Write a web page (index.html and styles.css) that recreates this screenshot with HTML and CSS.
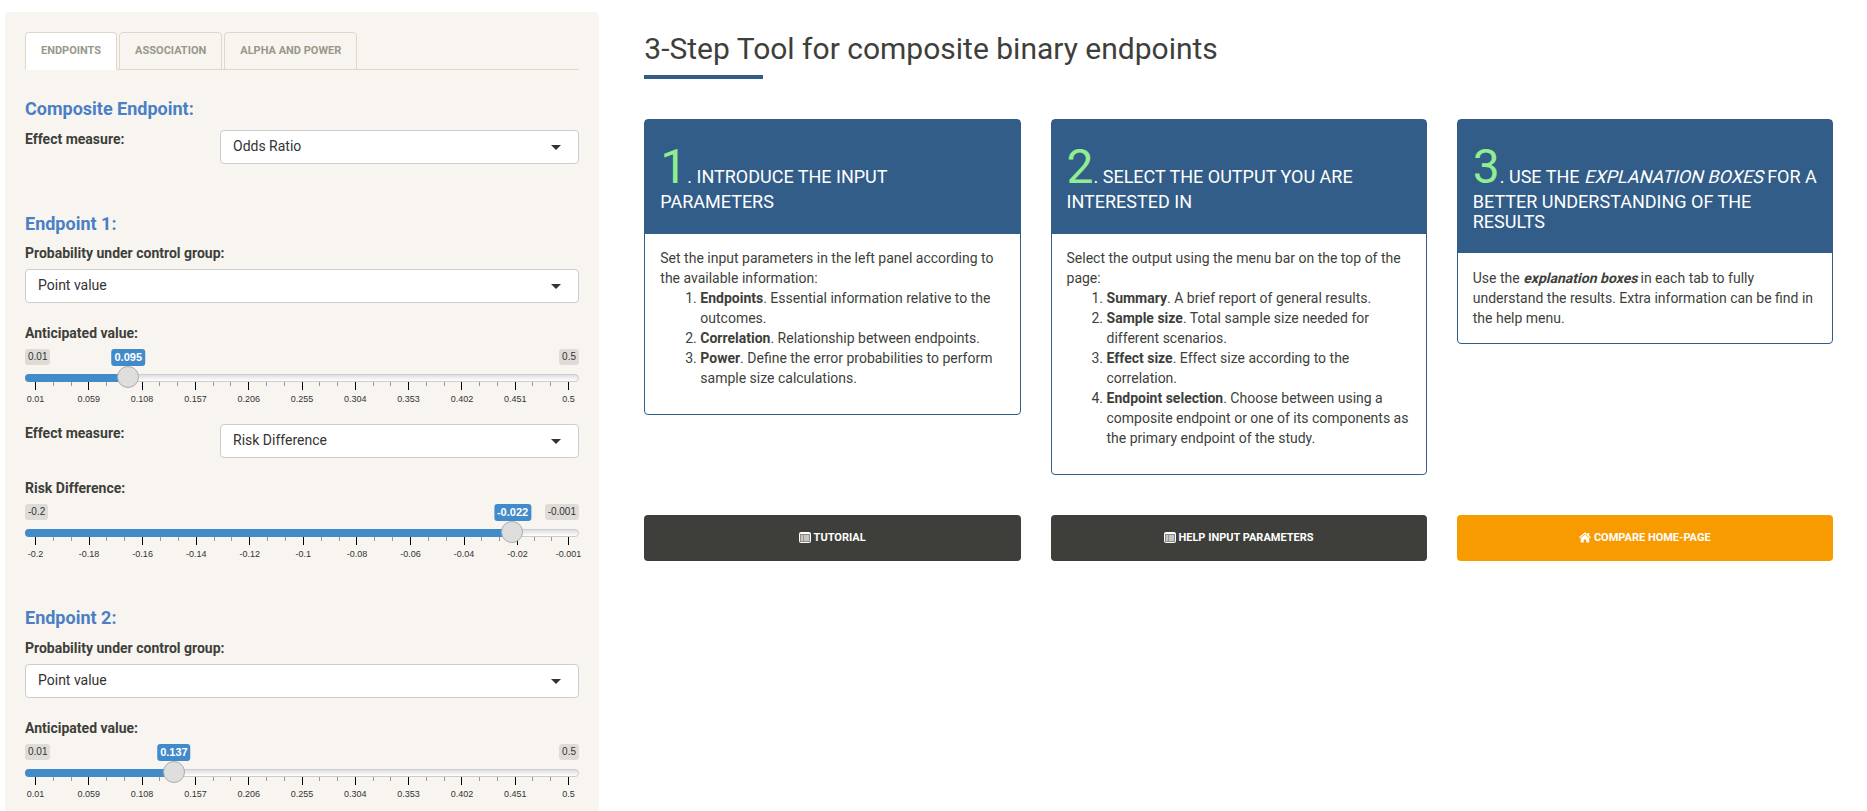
FILE: index.html
```
<!DOCTYPE html>
<html lang="en">
<head>
<meta charset="utf-8">
<title>3-Step Tool for composite binary endpoints</title>
<link rel="stylesheet" href="styles.css">
</head>
<body>
<div class="page">
  <aside class="well">
    <ul class="tabs">
      <li class="tab active">Endpoints</li>
      <li class="tab">Association</li>
      <li class="tab">Alpha and power</li>
    </ul>
    <section class="composite">
      <h4>Composite Endpoint:</h4>
      <div class="row"><label>Effect measure:</label><div class="select">Odds Ratio<i class="caret"></i></div></div>
    </section>
    <section class="endpoint">
      <h4>Endpoint 1:</h4>
      <label>Probability under control group:</label>
      <div class="select">Point value<i class="caret"></i></div>
      <label class="slider-label">Anticipated value:</label>
      <div class="slider" data-min="0.01" data-max="0.5" data-step="0.049" data-value="0.095"></div>
      <div class="row"><label>Effect measure:</label><div class="select">Risk Difference<i class="caret"></i></div></div>
      <label class="slider-label">Risk Difference:</label>
      <div class="slider" data-min="-0.2" data-max="-0.001" data-step="0.02" data-value="-0.022"></div>
    </section>
    <section class="endpoint last">
      <h4>Endpoint 2:</h4>
      <label>Probability under control group:</label>
      <div class="select">Point value<i class="caret"></i></div>
      <label class="slider-label">Anticipated value:</label>
      <div class="slider" data-min="0.01" data-max="0.5" data-step="0.049" data-value="0.137"></div>
    </section>
  </aside>
  <main>
    <h2>3-Step Tool for composite binary endpoints</h2>
    <div class="rule"></div>
    <div class="cards">
      <article class="card">
        <h4><span class="num">1</span>. Introduce the input parameters</h4>
        <div class="body">Set the input parameters in the left panel according to the available information:
          <ol>
            <li><b>Endpoints</b>. Essential information relative to the outcomes.</li>
            <li><b>Correlation</b>. Relationship between endpoints.</li>
            <li><b>Power</b>. Define the error probabilities to perform sample size calculations.</li>
          </ol>
        </div>
      </article>
      <article class="card">
        <h4><span class="num">2</span>. Select the output you are interested in</h4>
        <div class="body">Select the output using the menu bar on the top of the page:
          <ol>
            <li><b>Summary</b>. A brief report of general results.</li>
            <li><b>Sample size</b>. Total sample size needed for different scenarios.</li>
            <li><b>Effect size</b>. Effect size according to the correlation.</li>
            <li><b>Endpoint selection</b>. Choose between using a composite endpoint or one of its components as the primary endpoint of the study.</li>
          </ol>
        </div>
      </article>
      <article class="card">
        <h4><span class="num">3</span>. Use the <span class="slant">explanation boxes</span> for a better understanding of the results</h4>
        <div class="body">Use the <b class="slant">explanation boxes</b> in each tab to fully understand the results. Extra information can be find in the help menu.</div>
      </article>
    </div>
    <div class="buttons">
      <button class="btn"><svg class="icon" viewBox="0 0 12 11"><rect x=".5" y=".5" width="11" height="10" rx="1" fill="#8b8c88" stroke="#fff"/><path fill="none" stroke="#fff" d="M1 1.5h10M2 4h2M4.8 4h5.2M2 6h2M4.8 6h5.2M2 8h2M4.8 8h5.2"/></svg> Tutorial</button>
      <button class="btn"><svg class="icon" viewBox="0 0 12 11"><rect x=".5" y=".5" width="11" height="10" rx="1" fill="#8b8c88" stroke="#fff"/><path fill="none" stroke="#fff" d="M1 1.5h10M2 4h2M4.8 4h5.2M2 6h2M4.8 6h5.2M2 8h2M4.8 8h5.2"/></svg> Help input parameters</button>
      <button class="btn orange"><svg class="icon" viewBox="0 0 12 11"><path fill="#fff" d="M6 .2 8.6 2.4V1h1.6v2.8L12 5.3l-.7 1L6 1.8.7 6.3 0 5.3zM6 2.6l4.3 3.6v4q0 .4-.4.4H7.2V7.4H4.8v3.2H2.1q-.4 0-.4-.4v-4z"/></svg> Compare home-page</button>
    </div>
  </main>
</div>
<script src="slider.js"></script>
</body>
</html>
```
FILE: slider.js
```
// Builds each range slider (labels, track, handle and tick grid) from its data attributes.
document.querySelectorAll('.slider').forEach(function (el) {
  var min = +el.dataset.min, max = +el.dataset.max, step = +el.dataset.step;
  var pct = function (v) { return (v - min) / (max - min) * 100; };
  var fmt = function (v) { return String(+v.toFixed(3)); };
  var pos = 'left:' + pct(+el.dataset.value) + '%';
  var vals = [];
  for (var v = min; v < max - 1e-6; v += step) vals.push(v);
  vals.push(max);
  var grid = '';
  vals.forEach(function (v, i) {
    grid += '<i class="tick" style="left:' + pct(v) + '%"></i><span class="tick-text" style="left:' + pct(v) + '%">' + fmt(v) + '</span>';
    if (i < vals.length - 1) {
      [1, 2].forEach(function (k) {
        grid += '<i class="tick minor" style="left:' + pct(v + (vals[i + 1] - v) * k / 3) + '%"></i>';
      });
    }
  });
  el.innerHTML =
    '<div class="limits"><span>' + fmt(min) + '</span><span>' + fmt(max) + '</span></div>' +
    '<div class="track"></div>' +
    '<div class="scale"><div class="fill" style="width:calc(' + pct(+el.dataset.value) + '% + 11px)"></div>' + grid +
    '<span class="handle" style="' + pos + '"></span><span class="value" style="' + pos + '">' + el.dataset.value + '</span></div>';
});
```
FILE: styles.css
```
* { box-sizing: border-box; }
body {
  margin: 0;
  height: 811px;
  overflow: hidden;
  font: 14px/20px Roboto, sans-serif;
  color: #3e3f3a;
  background: #fff;
}
h2, h4, ul, ol { margin: 0; padding: 0; }
.page { display: flex; align-items: flex-start; height: 811px; padding: 12px 34px 0 5px; }
.well {
  width: 594px;
  height: 799px;
  flex: none;
  padding: 20px;
  overflow: hidden;
  background: #f8f5f0;
  border-radius: 4px 4px 0 0;
}
.tabs { display: flex; gap: 2px; height: 38px; border-bottom: 1px solid #dfd7ca; list-style: none; }
.tab {
  height: 38px;
  padding: 7px 15px;
  border: 1px solid #dfd7ca;
  border-radius: 4px 4px 0 0;
  font-size: 11px;
  line-height: 22px;
  font-weight: 700;
  text-transform: uppercase;
  color: #98978b;
}
.tab.active { background: #fff; border-bottom-color: #fff; }
.well h4 { font-size: 18px; line-height: 20px; font-weight: 700; color: #4a7fc5; }
.composite { height: 115px; margin-top: 29px; }
.endpoint { height: 394px; }
.endpoint.last { height: auto; }
label { display: block; font-weight: 700; }
.well h4 + label { margin-top: 9px; }
.well .last h4 + label { margin-top: 10px; }
.endpoint > .select { margin-top: 6px; }
.row { display: grid; grid-template-columns: 195px 1fr; }
.row label { margin-top: -1px; }
.composite .row { margin-top: 11px; }
.endpoint .row { margin-top: 17px; }
.select {
  display: flex;
  align-items: center;
  justify-content: space-between;
  height: 34px;
  padding: 0 17px 2px 12px;
  border: 1px solid #ccc;
  border-radius: 4px;
  background: #fff;
  color: #333;
}
.caret { border: 5px solid transparent; border-top-color: #333; border-bottom: 0; margin-top: 2px; }
.slider-label { margin-top: 20px; }
.slider { position: relative; height: 58px; margin-top: 6px; }
.limits { display: flex; justify-content: space-between; height: 16px; }
.limits span {
  padding: 1px 3px;
  border-radius: 3px;
  background: #dfdcd8;
  font: 10px/14px "Liberation Sans", Arial, sans-serif;
  color: #333;
}
.track {
  height: 8px;
  margin-top: 9px;
  border: 1px solid #ccc;
  border-radius: 8px;
  background: linear-gradient(#dedede, #fff);
}
.scale { position: relative; margin: 0 11px 0 10px; }
.fill { position: absolute; left: -10px; top: -8px; height: 8px; background: #428bca; border-radius: 8px 0 0 8px; }
.tick { position: absolute; top: 0; width: 1px; height: 8px; background: #000; }
.tick.minor { height: 4px; background: #999; }
.tick-text {
  position: absolute;
  top: 12px;
  margin-left: .5px;
  transform: translateX(-50%);
  font: 9px/11px "Liberation Sans", Arial, sans-serif;
  color: #333;
}
.handle {
  position: absolute;
  top: -16px;
  width: 22px;
  height: 22px;
  margin-left: -10.4px;
  border: 1px solid #ababab;
  border-radius: 50%;
  background: #dedede;
}
.value {
  position: absolute;
  top: -33px;
  margin-left: .8px;
  padding: 1px 3px;
  transform: translateX(-50%);
  border-radius: 3px;
  background: #428bca;
  font: bold 11px/15px "Liberation Sans", Arial, sans-serif;
  color: #fff;
}
main { flex: 1; padding: 20px 0 0 45.3px; }
h2 { font-size: 30px; line-height: 33px; font-weight: 400; }
.rule { width: 119px; height: 4px; margin-top: 10px; background: #325d88; }
.cards { display: grid; grid-template-columns: repeat(3, 1fr); gap: 30px; height: 396px; margin-top: 40px; align-items: start; }
.card { border: 1px solid #325d88; border-radius: 4px; }
.card h4 {
  padding: 22px 15px 20.8px;
  border-bottom: 1px solid #325d88;
  background: #325d88;
  color: #fff;
  font-size: 18px;
  line-height: 19.8px;
  font-weight: 400;
  text-transform: uppercase;
}
.card:last-child h4 { padding-right: 12px; }
.num { font-size: 48px; line-height: 50px; color: #90ee90; }
.slant {
  display: inline-block;
  margin-right: -.3px;
  transform: skewX(-14deg);
  transform-origin: 0 80%;
}
.body { padding: 14.4px 15px 15px; }
.body ol { padding-left: 40px; margin-bottom: 10.6px; }
b { font-weight: 700; }
.buttons { display: grid; grid-template-columns: repeat(3, 1fr); gap: 30px; }
.btn {
  height: 46px;
  padding: 0 0 1px;
  border: 0;
  border-radius: 4px;
  background: #3e3f3a;
  color: #fff;
  font: 700 11px/22px Roboto, sans-serif;
  text-transform: uppercase;
}
.btn.orange { background: #f79b00; }
.icon { width: 12px; height: 11px; vertical-align: -2px; }
```
